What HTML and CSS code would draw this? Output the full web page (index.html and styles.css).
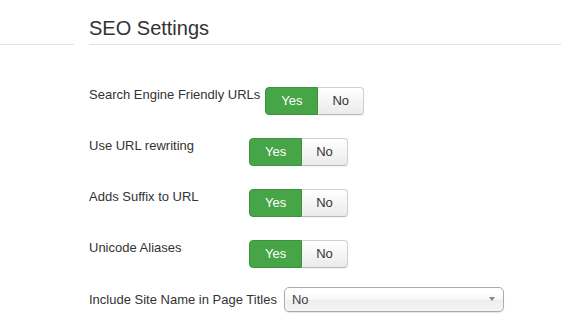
FILE: index.html
```html
<!DOCTYPE html>
<html>

<head>
    <title>SEO Settings</title>
    <meta name="viewport" content="width=device-width, initial-scale=1.0">
    <link rel="stylesheet" href="styles.css">
</head>

<body>
    <div class="page">
        <div class="sidebar">
            <div class="sidebar-head"></div>
        </div>
        <div class="main">
            <h2>SEO Settings</h2>
            <div class="form">
                <div class="control-group">
                    <label class="control-label">Search Engine Friendly URLs</label>
                    <div class="btn-group">
                        <button class="btn btn-yes">Yes</button>
                        <button class="btn btn-no">No</button>
                    </div>
                </div>
                <div class="control-group">
                    <label class="control-label">Use URL rewriting</label>
                    <div class="btn-group">
                        <button class="btn btn-yes">Yes</button>
                        <button class="btn btn-no">No</button>
                    </div>
                </div>
                <div class="control-group">
                    <label class="control-label">Adds Suffix to URL</label>
                    <div class="btn-group">
                        <button class="btn btn-yes">Yes</button>
                        <button class="btn btn-no">No</button>
                    </div>
                </div>
                <div class="control-group">
                    <label class="control-label">Unicode Aliases</label>
                    <div class="btn-group">
                        <button class="btn btn-yes">Yes</button>
                        <button class="btn btn-no">No</button>
                    </div>
                </div>
                <div class="control-group control-group-list">
                    <label class="control-label">Include Site Name in Page Titles</label>
                    <div class="chzn-single">
                        <span>No</span>
                        <b class="chzn-arrow"></b>
                    </div>
                </div>
            </div>
        </div>
    </div>
</body>

</html>
```

FILE: styles.css
```css
body {
    margin: 0;
    padding: 0;
    background: #fff;
    color: #333;
    font-family: "Liberation Sans", Arial, sans-serif;
    font-size: 13px;
}

.page {
    display: flex;
}

.sidebar {
    width: 74px;
    flex: 0 0 74px;
}

.sidebar-head {
    height: 44px;
    border-bottom: 1px solid #e3e3e3;
}

.main {
    flex: 1;
    margin-left: 15px;
}

h2 {
    margin: 0;
    padding: 16px 0 4px;
    font-size: 20px;
    font-weight: normal;
    line-height: 24px;
    color: #333;
    border-bottom: 1px solid #e3e3e3;
}

.form {
    padding-top: 42px;
}

.control-group {
    display: flex;
    align-items: flex-start;
    margin-bottom: 23px;
}

.control-label {
    flex: 0 0 auto;
    min-width: 160px;
    padding-right: 5px;
    box-sizing: border-box;
    line-height: 18px;
    margin-top: -1px;
}

.control-group-list {
    align-items: center;
    margin-top: -4px;
}

.control-group-list .control-label {
    margin-top: 0;
    padding-right: 7px;
}

.btn-group {
    display: flex;
}

.btn {
    font-family: inherit;
    font-size: 13px;
    line-height: 26px;
    padding: 0 15px;
    margin: 0;
    border: 1px solid #ccc;
    cursor: pointer;
}

.btn-yes {
    background: #46a546;
    border-color: #3d933d;
    color: #fff;
    border-radius: 4px 0 0 4px;
}

.btn-no {
    padding: 0 14px;
    background: linear-gradient(#ffffff, #ebebeb);
    border-color: #d0d0d0 #d0d0d0 #b8b8b8;
    border-left: none;
    color: #333;
    border-radius: 0 4px 4px 0;
    box-shadow: inset 0 1px 0 rgba(255, 255, 255, .2), 0 1px 2px rgba(0, 0, 0, .05);
}

.chzn-single {
    position: relative;
    width: 220px;
    height: 25px;
    box-sizing: border-box;
    padding-left: 7px;
    line-height: 23px;
    color: #444;
    border: 1px solid #aaa;
    border-radius: 5px;
    background: linear-gradient(#ffffff 20%, #f6f6f6 50%, #eeeeee 52%, #f4f4f4 100%);
    box-shadow: inset 0 0 3px #fff, 0 1px 1px rgba(0, 0, 0, .1);
}

.chzn-arrow {
    position: absolute;
    right: 8px;
    top: 9px;
    width: 0;
    height: 0;
    border-left: 3px solid transparent;
    border-right: 3px solid transparent;
    border-top: 4px solid #888;
}
```
